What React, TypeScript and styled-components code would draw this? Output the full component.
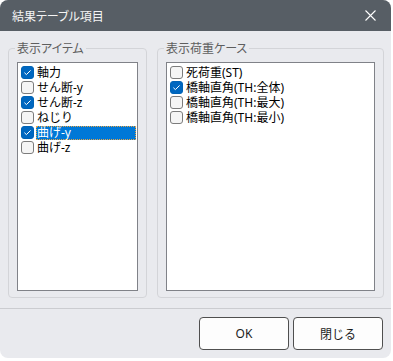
import React from 'react';
import styled, { createGlobalStyle } from 'styled-components';

const Global = createGlobalStyle`
  html, body { margin: 0; padding: 0; background: #ffffff; }
  body { font-family: "Noto Sans CJK JP", "Noto Sans", sans-serif; }
`;

const Window = styled.div`
  width: 391px;
  height: 358px;
  background: #e9eaee;
  border-radius: 8px;
  overflow: hidden;
  display: flex;
  flex-direction: column;
`;

const TitleBar = styled.div`
  height: 31px;
  flex: none;
  background: #575e65;
  color: #f4f4f4;
  display: flex;
  align-items: center;
  justify-content: space-between;
  padding: 0 9px 0 12px;
  font-size: 12px;
  font-feature-settings: "palt";
`;

const CloseButton = styled.button`
  width: 24px;
  height: 24px;
  border: none;
  background: transparent;
  padding: 0;
  display: flex;
  align-items: center;
  justify-content: center;
`;

const Main = styled.div`
  display: flex;
  gap: 10px;
  padding: 10px 7px 10px 8px;
`;

const Group = styled.fieldset<{ $w: number }>`
  box-sizing: border-box;
  width: ${(p) => p.$w}px;
  margin: 0;
  padding: 7px 8px 6px 8px;
  border: 1px solid #d3d4d8;
  border-radius: 4px;
  min-width: 0;
`;

const Legend = styled.legend`
  font-size: 12px;
  line-height: 14px;
  color: #5e5e5e;
  padding: 0 2px;
  margin-left: -2px;
  font-feature-settings: "palt";
`;

const ListBox = styled.div`
  box-sizing: border-box;
  height: 229px;
  background: #ffffff;
  border: 1px solid #808288;
  padding: 2px 1px 0 2px;
  display: flex;
  flex-direction: column;
`;

const Row = styled.div`
  display: flex;
  align-items: center;
  height: 15px;
`;

const Box = styled.span<{ $on: boolean }>`
  box-sizing: border-box;
  width: 13px;
  height: 13px;
  flex: none;
  margin-left: 1px;
  margin-right: 2px;
  border-radius: 3px;
  border: 1px solid ${(p) => (p.$on ? '#0063b6' : '#7c7c7c')};
  background: ${(p) => (p.$on ? '#0067c0' : '#f5f5f5')};
  display: flex;
  align-items: center;
  justify-content: center;
`;

const Label = styled.span<{ $sel: boolean }>`
  flex: 1;
  box-sizing: border-box;
  height: 14px;
  line-height: 14px;
  font-family: "Noto Sans", "Noto Sans CJK JP", sans-serif;
  font-size: 12px;
  padding-left: 1px;
  white-space: nowrap;
  color: ${(p) => (p.$sel ? '#ffffff' : '#000000')};
  background: ${(p) => (p.$sel ? '#0078d7' : 'transparent')};
  outline: ${(p) => (p.$sel ? '1px dotted #e8a444' : 'none')};
  outline-offset: -1px;
`;

const Footer = styled.div`
  border-top: 1px solid #cbccd0;
  padding: 8px 8px 7px 8px;
  display: flex;
  justify-content: flex-end;
  gap: 4px;
`;

const Button = styled.button`
  width: 90px;
  height: 33px;
  box-sizing: border-box;
  border: 1px solid #4f4f4f;
  border-radius: 4px;
  background: #fdfdfd;
  color: #1b1b1b;
  font-family: "Noto Sans", "Noto Sans CJK JP", sans-serif;
  font-size: 12px;
  padding: 0;
`;

const Check = () => (
  <svg width="9" height="9" viewBox="0 0 9 9">
    <path d="M1.4 4.7 L3.4 6.6 L7.6 2.4" fill="none" stroke="#ffffff" strokeWidth="1" />
  </svg>
);

type Item = { label: string; on: boolean; sel?: boolean };

const items1: Item[] = [
  { label: '軸力', on: true },
  { label: 'せん断-y', on: false },
  { label: 'せん断-z', on: true },
  { label: 'ねじり', on: false },
  { label: '曲げ-y', on: true, sel: true },
  { label: '曲げ-z', on: false },
];

const items2: Item[] = [
  { label: '死荷重(ST)', on: false },
  { label: '橋軸直角(TH:全体)', on: true },
  { label: '橋軸直角(TH:最大)', on: false },
  { label: '橋軸直角(TH:最小)', on: false },
];

const List = ({ items }: { items: Item[] }) => (
  <ListBox>
    {items.map((it) => (
      <Row key={it.label}>
        <Box $on={it.on}>{it.on && <Check />}</Box>
        <Label $sel={!!it.sel}>{it.label}</Label>
      </Row>
    ))}
  </ListBox>
);

export default function App() {
  return (
    <>
      <Global />
      <Window>
        <TitleBar>
          <span>結果テーブル項目</span>
          <CloseButton aria-label="close">
            <svg width="11" height="11" viewBox="0 0 11 11">
              <path d="M0.5 0.5 L10.5 10.5 M10.5 0.5 L0.5 10.5" stroke="#ffffff" strokeWidth="1.1" />
            </svg>
          </CloseButton>
        </TitleBar>
        <Main>
          <Group $w={139}>
            <Legend>表示アイテム</Legend>
            <List items={items1} />
          </Group>
          <Group $w={227}>
            <Legend>表示荷重ケース</Legend>
            <List items={items2} />
          </Group>
        </Main>
        <Footer>
          <Button>OK</Button>
          <Button>閉じる</Button>
        </Footer>
      </Window>
    </>
  );
}
